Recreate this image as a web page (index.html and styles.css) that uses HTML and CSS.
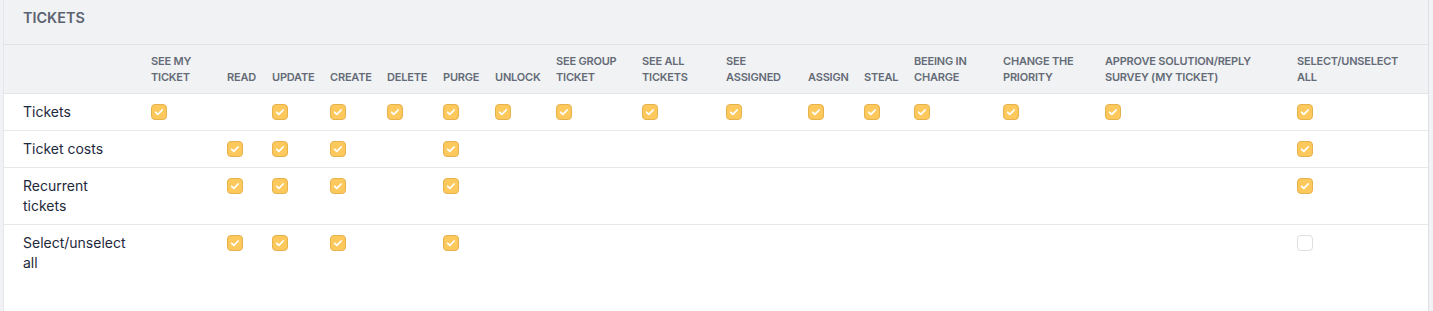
FILE: index.html
```html
<!DOCTYPE html>
<html lang="en">
<head>
<meta charset="utf-8">
<title>Tickets rights</title>
<link rel="stylesheet" href="styles.css">
</head>
<body>
<div class="card">
  <div class="card-header">Tickets</div>
  <table class="rights">
    <colgroup>
      <col class="c-label"><col class="w76"><col class="w45"><col class="w58"><col class="w57"><col class="w56"><col class="w52"><col class="w61"><col class="w86"><col class="w84"><col class="w82"><col class="w56"><col class="w50"><col class="w89"><col class="w102"><col class="w192"><col>
    </colgroup>
    <thead>
      <tr>
        <th class="label"></th>
        <th>See my ticket</th>
        <th>Read</th>
        <th>Update</th>
        <th>Create</th>
        <th>Delete</th>
        <th>Purge</th>
        <th>Unlock</th>
        <th>See group ticket</th>
        <th>See all tickets</th>
        <th>See assigned</th>
        <th>Assign</th>
        <th>Steal</th>
        <th>Beeing in charge</th>
        <th>Change the priority</th>
        <th>Approve solution/reply survey (my ticket)</th>
        <th class="all">Select/unselect all</th>
      </tr>
    </thead>
    <tbody>
      <tr>
        <td class="label">Tickets</td>
        <td><span class="cb on"><svg viewBox="0 0 16 16"><path d="M4.2 8.3l2.5 2.4 4.9-5"/></svg></span></td>
        <td></td>
        <td><span class="cb on"><svg viewBox="0 0 16 16"><path d="M4.2 8.3l2.5 2.4 4.9-5"/></svg></span></td>
        <td><span class="cb on"><svg viewBox="0 0 16 16"><path d="M4.2 8.3l2.5 2.4 4.9-5"/></svg></span></td>
        <td><span class="cb on"><svg viewBox="0 0 16 16"><path d="M4.2 8.3l2.5 2.4 4.9-5"/></svg></span></td>
        <td><span class="cb on"><svg viewBox="0 0 16 16"><path d="M4.2 8.3l2.5 2.4 4.9-5"/></svg></span></td>
        <td><span class="cb on"><svg viewBox="0 0 16 16"><path d="M4.2 8.3l2.5 2.4 4.9-5"/></svg></span></td>
        <td><span class="cb on"><svg viewBox="0 0 16 16"><path d="M4.2 8.3l2.5 2.4 4.9-5"/></svg></span></td>
        <td><span class="cb on"><svg viewBox="0 0 16 16"><path d="M4.2 8.3l2.5 2.4 4.9-5"/></svg></span></td>
        <td><span class="cb on"><svg viewBox="0 0 16 16"><path d="M4.2 8.3l2.5 2.4 4.9-5"/></svg></span></td>
        <td><span class="cb on"><svg viewBox="0 0 16 16"><path d="M4.2 8.3l2.5 2.4 4.9-5"/></svg></span></td>
        <td><span class="cb on"><svg viewBox="0 0 16 16"><path d="M4.2 8.3l2.5 2.4 4.9-5"/></svg></span></td>
        <td><span class="cb on"><svg viewBox="0 0 16 16"><path d="M4.2 8.3l2.5 2.4 4.9-5"/></svg></span></td>
        <td><span class="cb on"><svg viewBox="0 0 16 16"><path d="M4.2 8.3l2.5 2.4 4.9-5"/></svg></span></td>
        <td><span class="cb on"><svg viewBox="0 0 16 16"><path d="M4.2 8.3l2.5 2.4 4.9-5"/></svg></span></td>
        <td><span class="cb on"><svg viewBox="0 0 16 16"><path d="M4.2 8.3l2.5 2.4 4.9-5"/></svg></span></td>
      </tr>
      <tr>
        <td class="label">Ticket costs</td>
        <td></td>
        <td><span class="cb on"><svg viewBox="0 0 16 16"><path d="M4.2 8.3l2.5 2.4 4.9-5"/></svg></span></td>
        <td><span class="cb on"><svg viewBox="0 0 16 16"><path d="M4.2 8.3l2.5 2.4 4.9-5"/></svg></span></td>
        <td><span class="cb on"><svg viewBox="0 0 16 16"><path d="M4.2 8.3l2.5 2.4 4.9-5"/></svg></span></td>
        <td></td>
        <td><span class="cb on"><svg viewBox="0 0 16 16"><path d="M4.2 8.3l2.5 2.4 4.9-5"/></svg></span></td>
        <td></td><td></td><td></td><td></td><td></td><td></td><td></td><td></td><td></td>
        <td><span class="cb on"><svg viewBox="0 0 16 16"><path d="M4.2 8.3l2.5 2.4 4.9-5"/></svg></span></td>
      </tr>
      <tr>
        <td class="label">Recurrent tickets</td>
        <td></td>
        <td><span class="cb on"><svg viewBox="0 0 16 16"><path d="M4.2 8.3l2.5 2.4 4.9-5"/></svg></span></td>
        <td><span class="cb on"><svg viewBox="0 0 16 16"><path d="M4.2 8.3l2.5 2.4 4.9-5"/></svg></span></td>
        <td><span class="cb on"><svg viewBox="0 0 16 16"><path d="M4.2 8.3l2.5 2.4 4.9-5"/></svg></span></td>
        <td></td>
        <td><span class="cb on"><svg viewBox="0 0 16 16"><path d="M4.2 8.3l2.5 2.4 4.9-5"/></svg></span></td>
        <td></td><td></td><td></td><td></td><td></td><td></td><td></td><td></td><td></td>
        <td><span class="cb on"><svg viewBox="0 0 16 16"><path d="M4.2 8.3l2.5 2.4 4.9-5"/></svg></span></td>
      </tr>
      <tr class="last">
        <td class="label">Select/unselect all</td>
        <td></td>
        <td><span class="cb on"><svg viewBox="0 0 16 16"><path d="M4.2 8.3l2.5 2.4 4.9-5"/></svg></span></td>
        <td><span class="cb on"><svg viewBox="0 0 16 16"><path d="M4.2 8.3l2.5 2.4 4.9-5"/></svg></span></td>
        <td><span class="cb on"><svg viewBox="0 0 16 16"><path d="M4.2 8.3l2.5 2.4 4.9-5"/></svg></span></td>
        <td></td>
        <td><span class="cb on"><svg viewBox="0 0 16 16"><path d="M4.2 8.3l2.5 2.4 4.9-5"/></svg></span></td>
        <td></td><td></td><td></td><td></td><td></td><td></td><td></td><td></td><td></td>
        <td><span class="cb"></span></td>
      </tr>
    </tbody>
  </table>
</div>
</body>
</html>
```

FILE: styles.css
```css
html, body {
  margin: 0;
  padding: 0;
}
body {
  background: #f1f2f5;
  font-family: Inter, "Noto Sans", sans-serif;
  color: #1e293b;
  height: 311px;
  overflow: hidden;
}
.card {
  margin-left: 3px;
  width: 1426px;
  box-sizing: border-box;
  background: #ffffff;
  border-left: 1px solid #e4e6ea;
  border-right: 1px solid #dfe1e5;
  min-height: 311px;
  padding-bottom: 40px;
}
.card-header {
  background: #f1f2f4;
  padding: 8px 19px 16px;
  line-height: 20px;
  font-size: 14.4px;
  font-weight: 600;
  text-transform: uppercase;
  color: #5b6270;
  border-bottom: 1px solid #e1e3e7;
}
.rights {
  width: 100%;
  table-layout: fixed;
  border-collapse: collapse;
}
.c-label { width: 139px; }
.w45 { width: 45px; }
.w50 { width: 50px; }
.w52 { width: 52px; }
.w56 { width: 56px; }
.w57 { width: 57px; }
.w58 { width: 58px; }
.w61 { width: 61px; }
.w76 { width: 76px; }
.w82 { width: 82px; }
.w84 { width: 84px; }
.w86 { width: 86px; }
.w89 { width: 89px; }
.w102 { width: 102px; }
.w192 { width: 192px; }
.rights th {
  background: #f1f2f4;
  padding: 8px;
  font-size: 11px;
  line-height: 16px;
  font-weight: 600;
  letter-spacing: -0.2px;
  text-transform: uppercase;
  color: #646b77;
  text-align: left;
  vertical-align: bottom;
  border-bottom: 1px solid #e4e6e9;
}
.rights th.all {
  padding-right: 26px;
}
.rights td {
  padding: 8px;
  font-size: 14px;
  line-height: 20px;
  vertical-align: top;
  border-bottom: 1px solid #e6e8eb;
}
.rights .label {
  padding-left: 19px;
  padding-right: 16px;
}
.rights tr.last td {
  border-bottom: none;
}
.cb {
  display: block;
  box-sizing: border-box;
  width: 16px;
  height: 16px;
  margin-top: 2px;
  border-radius: 4px;
  border: 1px solid #dcdee2;
  background: #ffffff;
}
.cb.on {
  background: #fdc95d;
  border-color: #e6b24c;
}
.cb svg {
  display: block;
  width: 14px;
  height: 14px;
  fill: none;
  stroke: #ffffff;
  stroke-width: 2;
  stroke-linecap: round;
  stroke-linejoin: round;
}
```
